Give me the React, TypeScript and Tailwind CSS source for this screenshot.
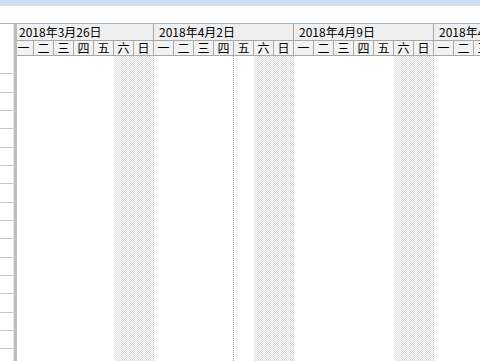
const weeks = ["2018年3月26日", "2018年4月2日", "2018年4月9日", "2018年4月16日"]
const days = ["一", "二", "三", "四", "五", "六", "日"]
const rows = Array.from({ length: 16 })

function Week({ label, marker }: { label: string; marker?: boolean }) {
  return (
    <div className="flex w-[140px] shrink-0 flex-col">
      {/* week title */}
      <div className="h-[17px] border-b border-r border-[#a8a8a8] bg-[#efefef] pl-[5px] text-[12px] leading-[16px] text-black whitespace-nowrap">
        {label}
      </div>
      {/* day names */}
      <div className="flex h-[15px] border-b border-[#a8a8a8] bg-[#f2f2f2]">
        {days.map((d) => (
          <div
            key={d}
            className="flex w-[20px] items-center justify-center border-r border-[#a8a8a8] text-[12px] leading-[14px] text-black"
          >
            {d}
          </div>
        ))}
      </div>
      {/* body */}
      <div className="flex flex-1">
        {days.map((d, i) => (
          <div
            key={d}
            className={
              i === 6
                ? "w-[20px] border-r border-dotted border-[#c4c4c4] bg-[repeating-conic-gradient(#dadada_0_25%,#ffffff_0_50%)] bg-[length:2px_2px]"
                : i === 5
                  ? "w-[20px] bg-[repeating-conic-gradient(#dadada_0_25%,#ffffff_0_50%)] bg-[length:2px_2px]"
                  : i === 3 && marker
                    ? "w-[20px] border-r border-dotted border-[#a0a0a0]"
                    : "w-[20px]"
            }
          />
        ))}
      </div>
    </div>
  )
}

export default function App() {
  return (
    <div
      className="flex h-[361px] w-[480px] flex-col overflow-hidden bg-white"
      style={{ fontFamily: '"Noto Sans CJK SC", "Liberation Sans", sans-serif' }}
    >
      <div className="h-[6px] bg-[#cfdff3]" />
      <div className="h-[17px] bg-white" />
      <div className="flex flex-1 border-t border-[#a4b2c6]">
        {/* left table stub */}
        <div className="flex w-[14px] flex-col border-r border-[#e4e4e4]">
          <div className="h-[32px] shrink-0" />
          {rows.map((_, i) => (
            <div key={i} className="h-[18.33px] shrink-0 border-b border-[#c4c4c4]" />
          ))}
        </div>
        <div className="w-[3px] bg-[#bdbdbd]" />
        {/* gantt */}
        <div className="flex flex-1 overflow-hidden">
          <div className="-ml-[3px] flex">
            {weeks.map((w, i) => (
              <Week key={w} label={w} marker={i === 1} />
            ))}
          </div>
        </div>
      </div>
    </div>
  )
}
